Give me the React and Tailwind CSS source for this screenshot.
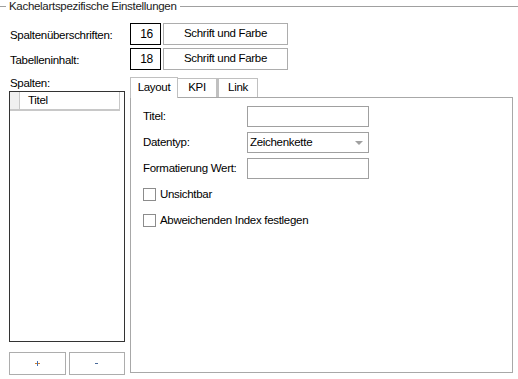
export default function App(){
  const font = { fontFamily: '"Liberation Sans", Arial, sans-serif' }
  return (
    <div style={font} className="w-[518px] h-[379px] bg-white text-[11.5px] tracking-[-0.3px] leading-none text-black overflow-hidden">
      {/* group header */}
      <div className="flex items-center h-[13px]">
        <div className="w-[6px] h-px bg-[#a0a0a0]"/>
        <span className="px-[3px] text-[#1a1a1a]">Kachelartspezifische Einstellungen</span>
        <div className="flex-1 h-px bg-[#a0a0a0]"/>
      </div>

      <div className="pl-[9px] pt-[10px]">
        <div className="flex items-center h-[22px]">
          <span className="w-[121px] pl-px pt-[4px]">Spaltenüberschriften:</span>
          <div className="w-[31px] h-[22px] border border-black flex items-center justify-end pr-[7px] text-[12px]">16</div>
          <button className="ml-[2px] w-[125px] h-[22px] border border-[#adadad] bg-white">Schrift und Farbe</button>
        </div>
        <div className="flex items-center h-[22px] mt-[3px]">
          <span className="w-[121px] pl-px pt-[4px]">Tabelleninhalt:</span>
          <div className="w-[31px] h-[22px] border border-black flex items-center justify-end pr-[7px] text-[12px]">18</div>
          <button className="ml-[2px] w-[125px] h-[22px] border border-[#adadad] bg-white">Schrift und Farbe</button>
        </div>

        <div className="flex gap-[5px] mt-[6px]">
          {/* left column */}
          <div className="w-[116px] flex flex-col">
            <span className="pl-px mt-[2px] h-[13px]">Spalten:</span>
            <div className="h-[251px] border border-[#333]">
              <div className="flex h-[19px] pr-[4px]">
                <div className="w-[10px] bg-[#f0f0f0] border-r border-b-2 border-[#c8c8c8]"/>
                <div className="flex-1 border-b-2 border-r border-[#c8c8c8] flex items-center pl-[8px]">Titel</div>
              </div>
            </div>
            <div className="flex gap-[3px] mt-[10px]">
              <button className="flex-1 h-[23px] border border-[#adadad] bg-white flex items-center justify-center">
                <svg width="5" height="5" viewBox="0 0 5 5"><path d="M0 2h5v1H0z" fill="#d9822b"/><path d="M2 0h1v5H2z" fill="#3d6fb6"/></svg>
              </button>
              <button className="flex-1 h-[23px] border border-[#adadad] bg-white flex items-center justify-center">
                <svg width="3" height="1" viewBox="0 0 3 1"><path d="M0 0h3v1H0z" fill="#4a6a9a"/></svg>
              </button>
            </div>
          </div>

          {/* right column: tab control */}
          <div className="w-[383px] flex flex-col">
            <div className="flex items-end h-[21px]">
              <div className="w-[48px] h-[21px] border border-b-0 border-[#c0c0c0] bg-white flex items-center justify-center relative z-10 -mb-px">Layout</div>
              <div className="w-[39px] h-[19px] border border-l-0 border-[#c0c0c0] border-b-0 flex items-center justify-center">KPI</div>
              <div className="w-[41px] h-[19px] border border-l-2 border-[#c0c0c0] border-b-0 flex items-center justify-center">Link</div>
            </div>
            <div className="h-[276px] border border-[#a8a8a8] pl-[12px] pt-[8px]">
              <div className="flex items-center h-[21px]">
                <span className="w-[104px]">Titel:</span>
                <div className="w-[122px] h-[21px] border border-[#a0a0a0]"/>
              </div>
              <div className="flex items-center h-[21px] mt-[5px]">
                <span className="w-[104px]">Datentyp:</span>
                <div className="w-[122px] h-[21px] border border-[#a0a0a0] flex items-center pl-[2px] pr-[5px]">
                  <span className="flex-1">Zeichenkette</span>
                  <svg width="8" height="4" viewBox="0 0 8 4"><path d="M0 0h8L4 4z" fill="#a0a0a0"/></svg>
                </div>
              </div>
              <div className="flex items-center h-[21px] mt-[5px]">
                <span className="w-[104px]">Formatierung Wert:</span>
                <div className="w-[122px] h-[21px] border border-[#a0a0a0]"/>
              </div>
              <div className="flex items-center mt-[9px] h-[13px]">
                <div className="w-[13px] h-[13px] border border-[#8c8c8c]"/>
                <span className="ml-[4px]">Unsichtbar</span>
              </div>
              <div className="flex items-center mt-[13px] h-[13px]">
                <div className="w-[13px] h-[13px] border border-[#8c8c8c]"/>
                <span className="ml-[4px]">Abweichenden Index festlegen</span>
              </div>
            </div>
          </div>
        </div>
      </div>
    </div>
  )
}
